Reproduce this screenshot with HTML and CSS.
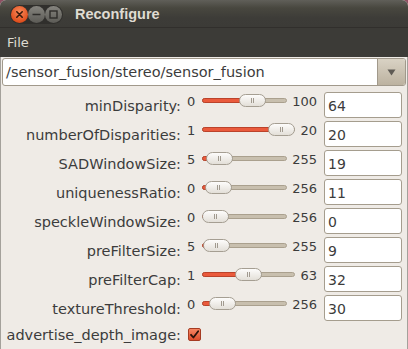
FILE: index.html
```html
<!DOCTYPE html>
<html>
<head>
<meta charset="utf-8">
<link rel="stylesheet" href="styles.css">
</head>
<body>
<div class="win">
  <div class="titlebar">
    <div class="btns">
      <span class="wb close"><svg width="17" height="17" viewBox="0 0 17 17"><path d="M5.8 5.8 L11.2 11.2 M11.2 5.8 L5.8 11.2" stroke="#3b1a0c" stroke-width="1.6" stroke-linecap="round"/></svg></span>
      <span class="wb"><svg width="17" height="17" viewBox="0 0 17 17"><path d="M4.5 8.5 H12.5" stroke="#2e2d2a" stroke-width="1.6"/></svg></span>
      <span class="wb"><svg width="17" height="17" viewBox="0 0 17 17"><rect x="5" y="5" width="7" height="7" fill="none" stroke="#2e2d2a" stroke-width="1.4"/></svg></span>
    </div>
    <div class="title">Reconfigure</div>
  </div>
  <div class="menubar"><span class="menu">File</span></div>
  <div class="content">
    <div class="combo">
      <div class="combo-text">/sensor_fusion/stereo/sensor_fusion</div>
      <div class="combo-btn"><svg width="9" height="7" viewBox="0 0 9 7"><path d="M0.5 0.5 H8.5 L4.5 6.5 Z" fill="#5e5a54"/></svg></div>
    </div>
    <div class="params">
      <div class="row">
        <div class="lbl">minDisparity:</div>
        <div class="sl"><span class="mn">0</span><div class="scale" style="--f:0.64"><div class="trk"><div class="fill"></div></div><div class="thumb"></div></div><span class="mx">100</span></div>
        <div class="ent">64</div>
      </div>
      <div class="row">
        <div class="lbl">numberOfDisparities:</div>
        <div class="sl"><span class="mn">1</span><div class="scale" style="--f:1"><div class="trk"><div class="fill"></div></div><div class="thumb"></div></div><span class="mx">20</span></div>
        <div class="ent">20</div>
      </div>
      <div class="row">
        <div class="lbl">SADWindowSize:</div>
        <div class="sl"><span class="mn">5</span><div class="scale" style="--f:0.056"><div class="trk"><div class="fill"></div></div><div class="thumb"></div></div><span class="mx">255</span></div>
        <div class="ent">19</div>
      </div>
      <div class="row">
        <div class="lbl">uniquenessRatio:</div>
        <div class="sl"><span class="mn">0</span><div class="scale" style="--f:0.043"><div class="trk"><div class="fill"></div></div><div class="thumb"></div></div><span class="mx">256</span></div>
        <div class="ent">11</div>
      </div>
      <div class="row">
        <div class="lbl">speckleWindowSize:</div>
        <div class="sl"><span class="mn">0</span><div class="scale" style="--f:0"><div class="trk"><div class="fill"></div></div><div class="thumb"></div></div><span class="mx">256</span></div>
        <div class="ent">0</div>
      </div>
      <div class="row">
        <div class="lbl">preFilterSize:</div>
        <div class="sl"><span class="mn">5</span><div class="scale" style="--f:0.016"><div class="trk"><div class="fill"></div></div><div class="thumb"></div></div><span class="mx">255</span></div>
        <div class="ent">9</div>
      </div>
      <div class="row">
        <div class="lbl">preFilterCap:</div>
        <div class="sl"><span class="mn">1</span><div class="scale" style="--f:0.5"><div class="trk"><div class="fill"></div></div><div class="thumb"></div></div><span class="mx">63</span></div>
        <div class="ent">32</div>
      </div>
      <div class="row">
        <div class="lbl">textureThreshold:</div>
        <div class="sl"><span class="mn">0</span><div class="scale" style="--f:0.117"><div class="trk"><div class="fill"></div></div><div class="thumb"></div></div><span class="mx">256</span></div>
        <div class="ent">30</div>
      </div>
      <div class="row row-check">
        <div class="lbl">advertise_depth_image:</div>
        <div class="chk"><svg width="13" height="13" viewBox="0 0 13 13"><path d="M3 6.8 L5.4 9.5 L10.2 3.2" fill="none" stroke="#2a120a" stroke-width="1.8" stroke-linecap="round" stroke-linejoin="round"/></svg></div>
      </div>
    </div>
  </div>
</div>
</body>
</html>
```
FILE: styles.css
```css
html, body {
  margin: 0;
  padding: 0;
}
body {
  background: #8e5063;
  width: 408px;
  height: 349px;
  overflow: hidden;
}
.win {
  width: 408px;
  height: 349px;
  background: #efebe6;
  border-radius: 6px 6px 0 0;
  overflow: hidden;
  display: flex;
  flex-direction: column;
}
.titlebar {
  height: 28px;
  box-sizing: border-box;
  border-bottom: 1px solid #312f2c;
  background: linear-gradient(#605f59 0, #48473f 8px, #3d3c38 18px, #3c3b37 100%);
  display: flex;
  align-items: center;
}
.btns {
  margin-left: 10px;
  margin-top: 2px;
  display: flex;
  padding: 1px;
  border-radius: 10px;
  background: #302f2c;
}
.wb {
  width: 17px;
  height: 17px;
  border-radius: 50%;
  background: linear-gradient(#85847e, #5c5b56);
  display: block;
}
.wb svg {
  display: block;
}
.wb.close {
  background: radial-gradient(circle at 50% 35%, #f98a5a, #e0501f 70%, #c24416);
}
.title {
  margin-left: 12px;
  margin-top: 1px;
  font: bold 14.5px "Liberation Sans", sans-serif;
  color: #dfdbd2;
}
.menubar {
  height: 29px;
  background: #3c3b37;
  display: flex;
  align-items: center;
}
.menu {
  margin-left: 7px;
  font: 13px "DejaVu Sans", sans-serif;
  color: #dfdbd2;
}
.content {
  flex: 1;
  border-left: 1px solid #a4a19b;
  border-right: 1px solid #a4a19b;
  padding-top: 1px;
}
.combo {
  margin: 0 1px;
  height: 28px;
  box-sizing: border-box;
  display: flex;
  border: 1px solid #a1998b;
  border-radius: 3px;
  background: #fff;
  overflow: hidden;
}
.combo-text {
  flex: 1;
  padding-left: 3px;
  font: 14.5px/26px "DejaVu Sans", sans-serif;
  color: #3c3c3c;
}
.combo-btn {
  width: 27px;
  border-left: 1px solid #a1998b;
  background: linear-gradient(#d9d2c4, #bcb2a0);
  display: flex;
  align-items: center;
  justify-content: center;
}
.params {
  padding-top: 6px;
}
.row {
  display: flex;
  height: 26px;
  margin-bottom: 3px;
  align-items: center;
}
.lbl {
  width: 180px;
  text-align: right;
  font: 14.5px "DejaVu Sans", sans-serif;
  color: #3c3c3c;
  white-space: nowrap;
  margin-top: 1px;
}
.sl {
  width: 130px;
  margin-left: 6px;
  align-self: flex-start;
  margin-top: 2px;
  height: 13px;
  display: flex;
  align-items: center;
}
.mn, .mx {
  font: 13px/13px "DejaVu Sans", sans-serif;
  color: #3c3c3c;
  position: relative;
  top: 1px;
}
.scale {
  flex: 1;
  position: relative;
  height: 13px;
  margin: 0 5px 0 7px;
}
.trk {
  position: absolute;
  left: 0;
  right: 0;
  top: 4px;
  height: 5px;
  box-sizing: border-box;
  border: 1px solid #aaa08e;
  border-radius: 3px;
  background: #c8bfae;
}
.fill {
  position: absolute;
  left: -1px;
  top: -1px;
  height: 5px;
  box-sizing: border-box;
  width: calc(var(--f) * (100% - 25px) + 14px);
  background: #ea5a3c;
  border: 1px solid #bb432b;
  border-radius: 3px;
}
.thumb {
  position: absolute;
  top: 0;
  left: calc(var(--f) * (100% - 27px));
  width: 27px;
  height: 13px;
  box-sizing: border-box;
  border: 1px solid #a59e92;
  border-radius: 7px;
  background: linear-gradient(#fdfcfb, #e3dfd8);
}
.thumb::before, .thumb::after {
  content: "";
  position: absolute;
  top: 3px;
  width: 1px;
  height: 5px;
  background: #a19a8f;
}
.thumb::before {
  left: 11px;
}
.thumb::after {
  left: 13px;
}
.ent {
  margin-left: 7px;
  width: 78px;
  height: 26px;
  box-sizing: border-box;
  border: 1px solid #a59d8e;
  border-radius: 3px;
  background: #fff;
  padding-left: 3px;
  font: 14px/24px "DejaVu Sans", sans-serif;
  color: #3c3c3c;
  padding-top: 1px;
}
.row-check {
  height: 20px;
  margin-top: 0;
}
.chk {
  margin-left: 7px;
  width: 13px;
  height: 13px;
  box-sizing: border-box;
  border: 1px solid #a53b22;
  border-radius: 2px;
  background: linear-gradient(#f58562, #dc4d2c);
  position: relative;
}
.chk svg {
  position: absolute;
  left: -1px;
  top: -1px;
}
```
